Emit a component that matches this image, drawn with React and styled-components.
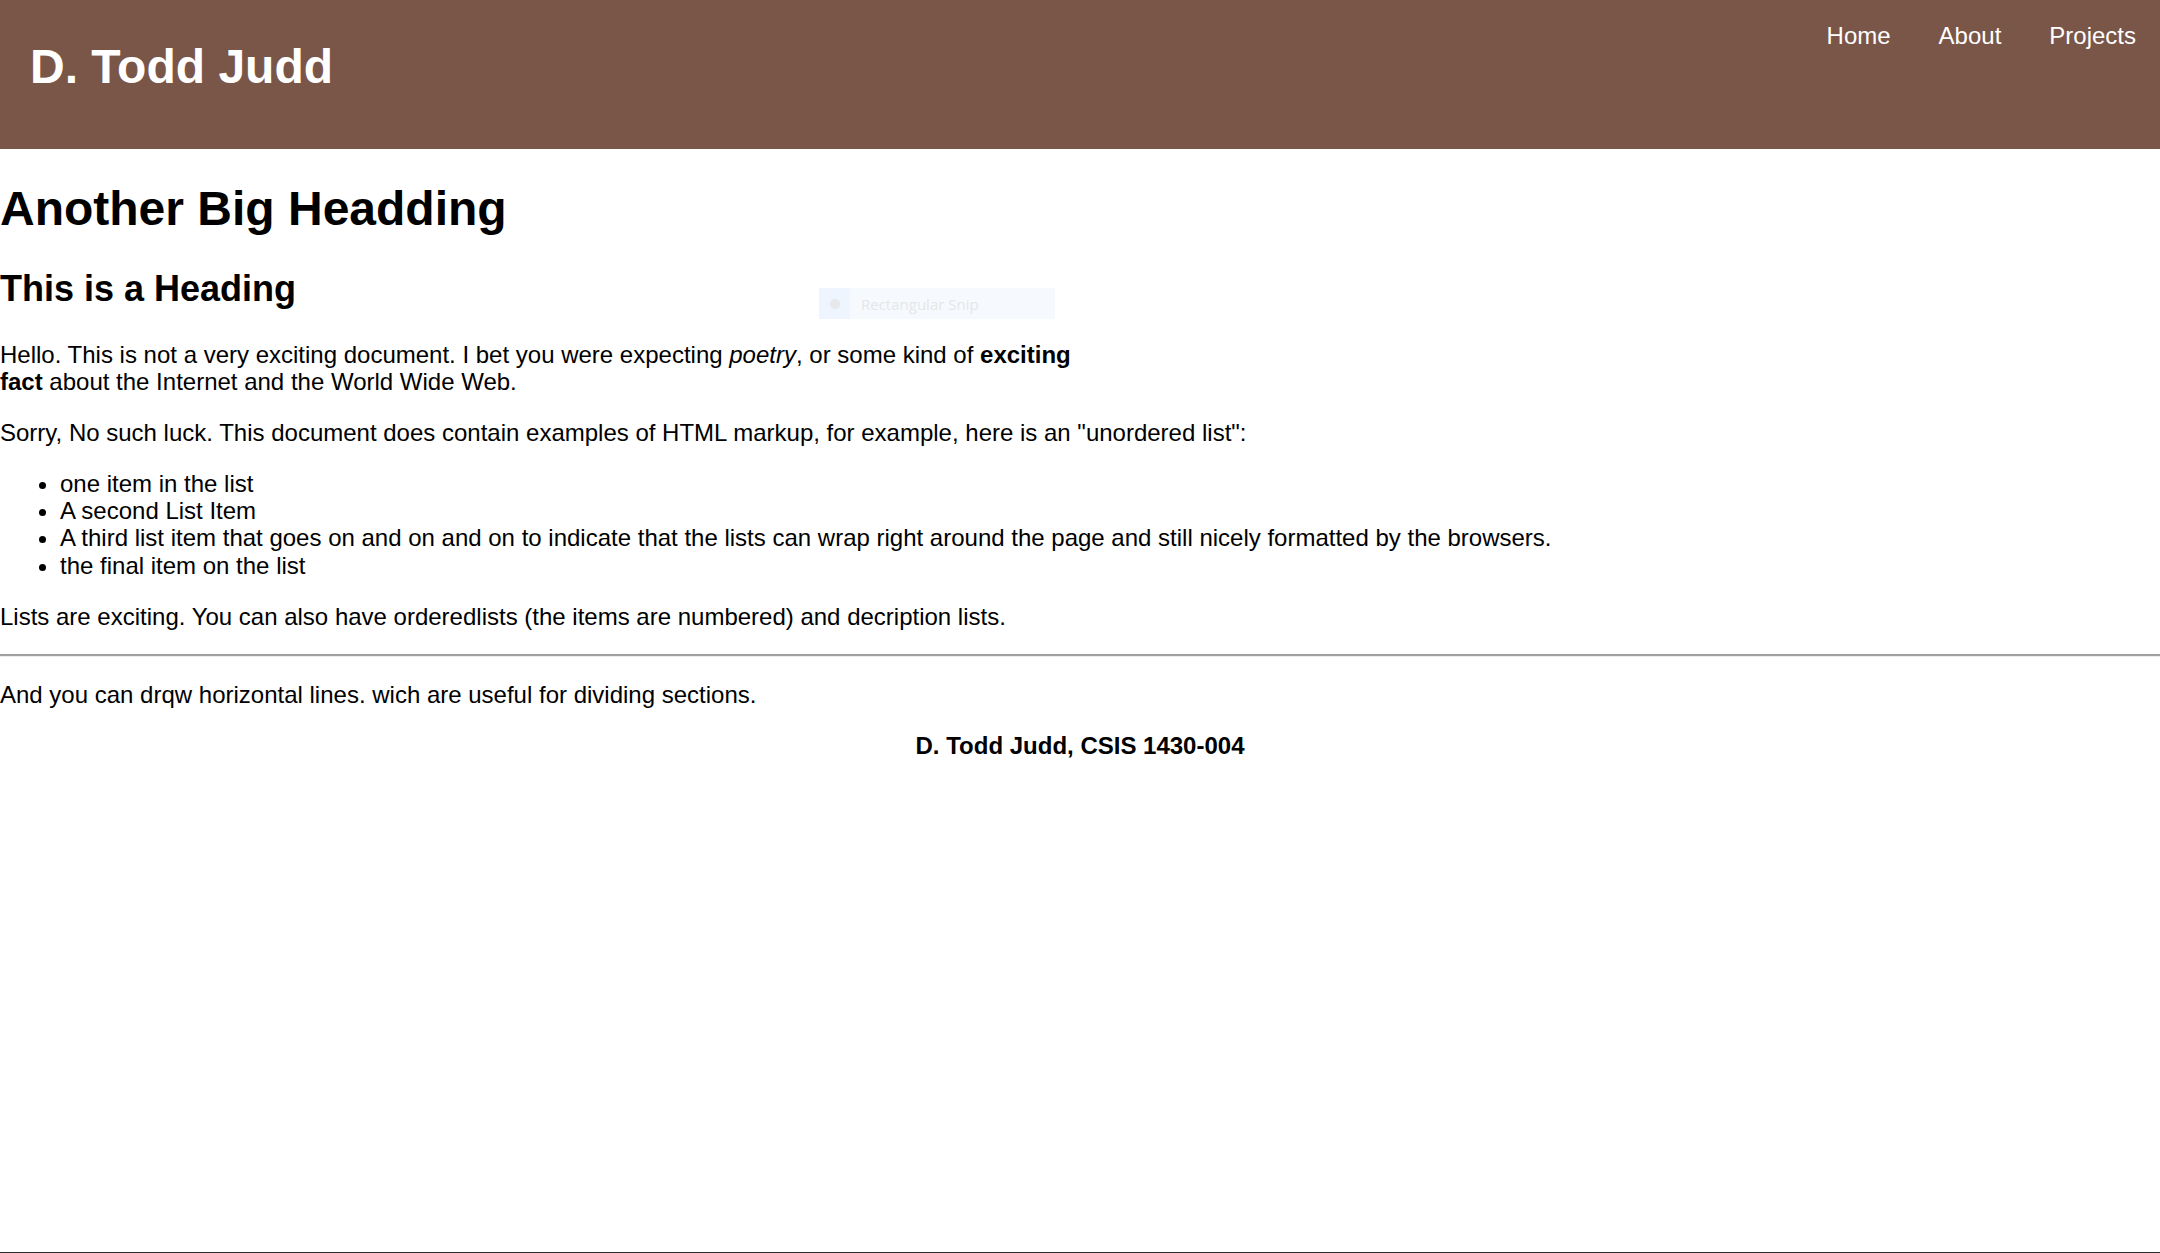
import React from "react"
import styled, { createGlobalStyle } from "styled-components";

const GlobalStyle = createGlobalStyle`
  body {
    margin: 0;
    font-family: "Liberation Sans", Arial, sans-serif;
    font-size: 24px;
    color: #000;
    background: #fff;
  }
`

const Page = styled.div`
  position: relative;
  min-height: 100vh;
  box-sizing: border-box;
  border-bottom: 1px solid #2b2b2b;
`

const Header = styled.header`
  display: flex;
  justify-content: space-between;
  align-items: flex-start;
  height: 149px;
  background: #7a5649;
  color: #fff;
`

const SiteTitle = styled.h1`
  margin: 39px 0 0 30px;
  font-size: 48px;
  font-weight: bold;
`

const Nav = styled.nav`
  display: flex;
  margin-top: 22px;
`

const NavLink = styled.a`
  padding: 0 24px;
  color: #fff;
  text-decoration: none;
  font-size: 24px;
`

const Main = styled.main`
  padding: 0;
  line-height: 27.1px;
`

const BigHeading = styled.h1`
  font-size: 48px;
  line-height: normal;
  margin: 32px 0;
`

const SubHeading = styled.h2`
  font-size: 36px;
  line-height: normal;
  margin: 20px 0 31px;
`

const Para = styled.p`
  margin: 24px 0;
  text-align: ${props => (props.$center ? "center" : "left")};
  font-weight: ${props => (props.$bold ? "bold" : "normal")};
`

const Wrap = styled.span`
  display: block;
  max-width: 1075px;
`

const List = styled.ul`
  margin: 24px 0 23px;
  padding-left: 60px;
`

const Rule = styled.hr`
  margin: 0;
  border: 0;
  border-top: 2px solid #a0a0a0;
  border-bottom: 1px solid #ececec;
`

const SnipHint = styled.div`
  position: absolute;
  left: 819px;
  top: 288px;
  width: 236px;
  height: 31px;
  display: flex;
  align-items: center;
  background: #f6faff;
  font-family: "Open Sans", "Noto Sans", sans-serif;
  font-size: 15px;
  color: #e6e6e6;
`

const SnipIcon = styled.span`
  width: 31px;
  height: 31px;
  display: flex;
  align-items: center;
  justify-content: center;
  background: #eef5fe;
  margin-right: 11px;

  &::before {
    content: "";
    width: 10px;
    height: 10px;
    border-radius: 50%;
    background: #e6e8ea;
  }
`

export default function App() {
  return (
    <Page>
      <GlobalStyle />
      <Header>
        <SiteTitle>D. Todd Judd</SiteTitle>
        <Nav>
          <NavLink href="#">Home</NavLink>
          <NavLink href="#">About</NavLink>
          <NavLink href="#">Projects</NavLink>
        </Nav>
      </Header>
      <Main>
        <BigHeading>Another Big Headding</BigHeading>
        <SubHeading>This is a Heading</SubHeading>
        <Para>
          <Wrap>
            Hello. This is not a very exciting document. I bet you were expecting <em>poetry</em>, or some kind of <strong>exciting fact</strong> about the Internet and the World Wide Web.
          </Wrap>
        </Para>
        <Para>
          Sorry, No such luck. This document does contain examples of HTML markup, for example, here is an "unordered list":
        </Para>
        <List>
          <li>one item in the list</li>
          <li>A second List Item</li>
          <li>A third list item that goes on and on and on to indicate that the lists can wrap right around the page and still nicely formatted by the browsers.</li>
          <li>the final item on the list</li>
        </List>
        <Para>
          Lists are exciting. You can also have orderedlists (the items are numbered) and decription lists.
        </Para>
        <Rule />
        <Para>And you can drqw horizontal lines. wich are useful for dividing sections.</Para>
        <Para $center $bold>D. Todd Judd, CSIS 1430-004</Para>
      </Main>
      <SnipHint>
        <SnipIcon />
        Rectangular Snip
      </SnipHint>
    </Page>
  )
}
